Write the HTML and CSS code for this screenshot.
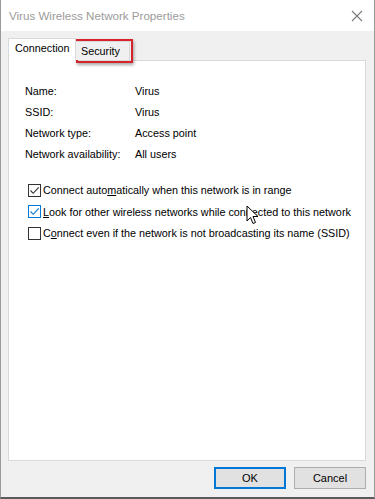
FILE: index.html
```html
<!DOCTYPE html>
<html>
<head>
<meta charset="utf-8">
<link rel="stylesheet" href="styles.css">
</head>
<body>
<div class="window">
  <div class="titlebar">
    <span class="title">Virus Wireless Network Properties</span>
    <svg class="close" width="12" height="12" viewBox="0 0 12 12"><path d="M1 1 L11 11 M11 1 L1 11" stroke="#7a7a7a" stroke-width="1.1" fill="none"/></svg>
  </div>
  <div class="client">
    <div class="tabs">
      <div class="tab active">Connection</div>
      <div class="tab inactive">Security</div>
    </div>
    <div class="panel">
      <div class="props">
        <span>Name:</span><span>Virus</span>
        <span>SSID:</span><span>Virus</span>
        <span>Network type:</span><span>Access point</span>
        <span>Network availability:</span><span>All users</span>
      </div>
      <div class="checks">
        <div class="check"><span class="box checked"><svg width="11" height="11" viewBox="0 0 11 11"><path d="M1.5 5.5 L4.2 8.3 L9.8 2.3" stroke="#333" stroke-width="1.1" fill="none"/></svg></span><span class="lbl">Connect auto<u>m</u>atically when this network is in range</span></div>
        <div class="check"><span class="box checked focus"><svg width="11" height="11" viewBox="0 0 11 11"><path d="M1.5 5.5 L4.2 8.3 L9.8 2.3" stroke="#0078d7" stroke-width="1.1" fill="none"/></svg></span><span class="lbl"><u>L</u>ook for other wireless networks while connected to this network</span></div>
        <div class="check"><span class="box"></span><span class="lbl">C<u>o</u>nnect even if the network is not broadcasting its name (SSID)</span></div>
      </div>
    </div>
    <div class="buttons">
      <button class="btn default">OK</button>
      <button class="btn">Cancel</button>
    </div>
  </div>
  <div class="highlight"></div>
  <svg class="cursor" width="14" height="22" viewBox="0 0 14 22"><path d="M1 1 L1 16 L4.5 12.5 L7 18.5 L9.5 17.5 L7 11.5 L12 11.5 Z" fill="#fff" stroke="#000" stroke-width="1" stroke-linejoin="round"/></svg>
</div>
</body>
</html>
```
FILE: styles.css
```css
html, body {
  margin: 0;
  padding: 0;
  background: #fff;
}
body {
  font-family: "Liberation Sans", Arial, sans-serif;
  font-size: 10.8px;
  color: #000;
}
.window {
  position: relative;
  width: 375px;
  height: 499px;
  box-sizing: border-box;
  border-left: 1px solid #9a9a9a;
  border-right: 1px solid #9a9a9a;
  border-bottom: 2px solid #5a5a5a;
  display: flex;
  flex-direction: column;
  background: #f0f0f0;
}
.titlebar {
  height: 31px;
  background: #fff;
  display: flex;
  align-items: center;
  justify-content: space-between;
  padding: 0 11px 0 8px;
  flex: none;
}
.title {
  color: #9b9b9b;
  font-size: 11.6px;
}
.client {
  flex: 1;
  display: flex;
  flex-direction: column;
  padding: 7px 8px 0 7px;
}
.tabs {
  display: flex;
  align-items: flex-end;
  height: 22px;
  position: relative;
  z-index: 1;
}
.tab {
  box-sizing: border-box;
  border: 1px solid #d9d9d9;
  border-bottom: none;
  white-space: nowrap;
}
.tab.active {
  background: #fff;
  height: 23px;
  line-height: 19px;
  width: 68px;
  margin-bottom: -1px;
  padding-left: 6px;
}
.tab.inactive {
  background: #f0f0f0;
  height: 19px;
  line-height: 19px;
  border-left: none;
  width: 54px;
  padding-left: 5px;
}
.panel {
  height: 401px;
  box-sizing: border-box;
  background: #fff;
  border: 1px solid #d9d9d9;
  padding: 22px 0 0 16px;
}
.props {
  display: grid;
  grid-template-columns: 110px auto;
  row-gap: 4.5px;
  line-height: 16.5px;
}
.checks {
  margin-top: 19px;
  padding-left: 3px;
  display: flex;
  flex-direction: column;
  gap: 4.5px;
}
.check {
  display: flex;
  align-items: center;
  height: 17px;
  gap: 2px;
  white-space: nowrap;
}
.box {
  box-sizing: border-box;
  width: 13px;
  height: 13px;
  border: 1px solid #333;
  background: #fff;
  display: flex;
  align-items: center;
  justify-content: center;
  flex: none;
}
.box.focus {
  border-color: #0078d7;
}
.buttons {
  display: flex;
  justify-content: flex-end;
  gap: 8px;
  padding-top: 6px;
}
.btn {
  box-sizing: border-box;
  width: 72px;
  height: 22px;
  background: #e1e1e1;
  border: 1px solid #adadad;
  font-family: inherit;
  font-size: 11px;
  padding: 0;
  color: #000;
}
.btn.default {
  border: 2px solid #0078d7;
}
.highlight {
  position: absolute;
  left: 75px;
  top: 39px;
  width: 57px;
  height: 24px;
  box-sizing: border-box;
  border: 2px solid #d4232b;
  box-shadow: 1px 2px 3px rgba(0,0,0,0.35);
}
.cursor {
  position: absolute;
  left: 245px;
  top: 205px;
}
```
